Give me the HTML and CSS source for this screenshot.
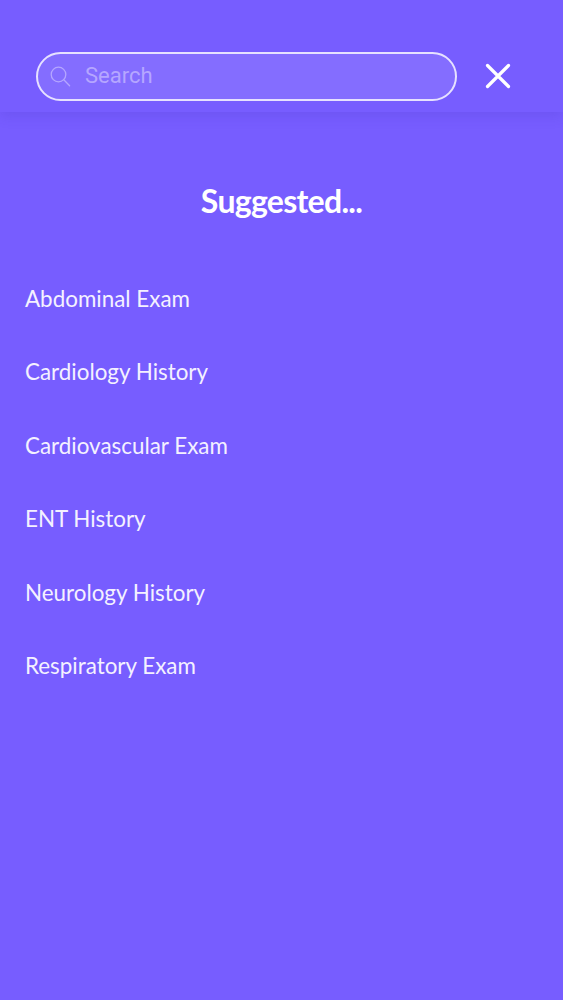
FILE: index.html
```html
<!DOCTYPE html>
<html lang="en">
<head>
    <meta charset="UTF-8">
    <meta name="viewport" content="width=device-width, initial-scale=1.0">
    <title>Search</title>
    <link rel="stylesheet" href="styles.css">
</head>
<body>
    <header class="search-bar">
        <div class="search-box">
            <svg class="search-icon" width="22" height="22" viewBox="0 0 22 22" fill="none" stroke="currentColor" stroke-width="1.3" stroke-linecap="round">
                <circle cx="9.5" cy="9.5" r="7.3"/>
                <path d="M14.8 14.8L20.6 20.8"/>
            </svg>
            <span class="search-placeholder">Search</span>
        </div>
        <svg class="close-icon" width="26" height="26" viewBox="0 0 26 26" fill="none" stroke="#fff" stroke-width="3.2" stroke-linecap="round">
            <path d="M2.5 2.5L23.5 23.5M23.5 2.5L2.5 23.5"/>
        </svg>
    </header>

    <h1 class="title">Suggested...</h1>

    <ul class="suggestions">
        <li>Abdominal Exam</li>
        <li>Cardiology History</li>
        <li>Cardiovascular Exam</li>
        <li>ENT History</li>
        <li>Neurology History</li>
        <li>Respiratory Exam</li>
    </ul>
</body>
</html>
```

FILE: styles.css
```css
body {
    background-color: #775dff;
    color: #ffffff;
    font-family: Lato, "Open Sans", sans-serif;
    margin: 0;
    height: 1000px;
    overflow: hidden;
}

.search-bar {
    display: flex;
    align-items: flex-start;
    height: 112px;
    padding: 52px 0 0 36px;
    box-sizing: border-box;
    background-color: #775dff;
    box-shadow: 0 4px 12px rgba(70, 50, 190, 0.2);
}

.search-box {
    display: flex;
    align-items: center;
    box-sizing: border-box;
    width: 421px;
    height: 49px;
    padding-left: 11px;
    border: 2px solid #e6e1ff;
    border-radius: 25px;
    background-color: #846dff;
}

.search-icon {
    color: #b5a6ff;
    flex-shrink: 0;
    margin-bottom: 2px;
}

.search-placeholder {
    margin: 0 0 3px 14px;
    font-family: Roboto, sans-serif;
    font-size: 22px;
    color: #b5a6ff;
}

.close-icon {
    margin: 11px 0 0 28px;
}

.title {
    margin: 67px 0 0;
    font-size: 32px;
    line-height: 44px;
    font-weight: 700;
    letter-spacing: -0.7px;
    text-align: center;
}

.suggestions {
    list-style: none;
    margin: 61px 0 0;
    padding: 0 0 0 25px;
    display: flex;
    flex-direction: column;
    gap: 43.4px;
}

.suggestions li {
    font-size: 22.4px;
    line-height: 30px;
    color: #f4f1ff;
}
```
